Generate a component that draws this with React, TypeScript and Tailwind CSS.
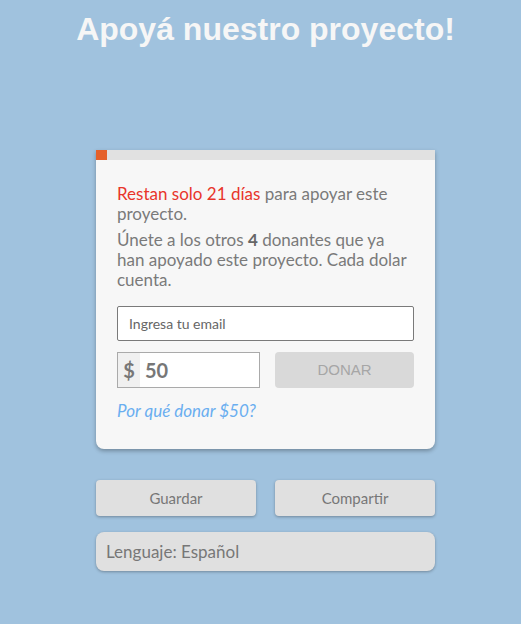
import React from 'react';

const font = "font-['Lato','Noto_Sans',sans-serif]";

export default function App() {
  return (
    <div className={`min-h-[624px] w-full bg-[#a0c2de] pl-[10px] ${font}`}>
      {/* Titulo */}
      <h1 className="pt-[10px] text-center text-[32px] leading-[38px] font-bold text-[#f6f6f6] font-['Liberation_Sans',Arial,sans-serif]">
        Apoyá nuestro proyecto!
      </h1>

      <div className="mx-auto mt-[102px] w-[339px]">
        {/* Tarjeta */}
        <div className="overflow-hidden rounded-b-[8px] bg-[#f7f7f7] shadow-[0_2px_4px_rgba(0,0,0,0.3)]">
          <div className="flex h-[10px] bg-[#e1e1e1]">
            <div className="h-full w-[11px] bg-[#e5602a]"></div>
          </div>
          <div className="px-[21px] pt-[24px] pb-[27px]">
            <p className="text-[17px] leading-[20px] text-[#7a7a7a]">
              <span className="text-[#e8352b]">Restan solo 21 días</span> para apoyar este
              <br />
              proyecto.
            </p>
            <p className="mt-[6px] text-[17px] leading-[20px] text-[#7a7a7a]">
              Únete a los otros <b className="font-bold text-[#666]">4</b> donantes que ya
              <br />
              <span className="whitespace-nowrap">han apoyado este proyecto. Cada dolar</span>
              <br />
              cuenta.
            </p>

            <input
              placeholder="Ingresa tu email"
              className="mt-[16px] block h-[35px] w-[297px] rounded-[2px] border border-[#7a7a7a] bg-white px-[11px] text-[14px] text-[#555] outline-none placeholder:text-[#666]"
            />

            <div className="mt-[11px] flex items-center justify-between">
              <div className="flex h-[36px] w-[143px] border border-[#aaa] bg-white">
                <span className="flex w-[22px] items-center justify-center bg-[#f0f0f0] text-[20px] font-bold text-[#777]">
                  $
                </span>
                <span className="flex items-center pl-[5px] text-[20px] font-bold text-[#777]">50</span>
              </div>
              <button className="h-[36px] w-[139px] rounded-[4px] bg-[#d9d9d9] text-[15px] text-[#a6a6a6] font-['Liberation_Sans',Arial,sans-serif]">
                DONAR
              </button>
            </div>

            <a className="mt-[12px] block text-[17px] leading-[22px] italic text-[#6aaef0]">
              Por qué donar $50?
            </a>
          </div>
        </div>

        {/* Acciones */}
        <div className="mt-[31px] flex justify-between">
          <button className="h-[36px] w-[160px] rounded-[4px] bg-[#e0e0e0] text-[15px] text-[#777] shadow-[0_1px_3px_rgba(0,0,0,0.3)]">
            Guardar
          </button>
          <button className="h-[36px] w-[160px] rounded-[4px] bg-[#e0e0e0] text-[15px] text-[#777] shadow-[0_1px_3px_rgba(0,0,0,0.3)]">
            Compartir
          </button>
        </div>
        <div className="mt-[16px] flex h-[39px] items-center rounded-[8px] bg-[#e0e0e0] px-[10px] text-[17px] text-[#777] shadow-[0_1px_3px_rgba(0,0,0,0.3)]">
          Lenguaje: Español
        </div>
      </div>
    </div>
  );
}
